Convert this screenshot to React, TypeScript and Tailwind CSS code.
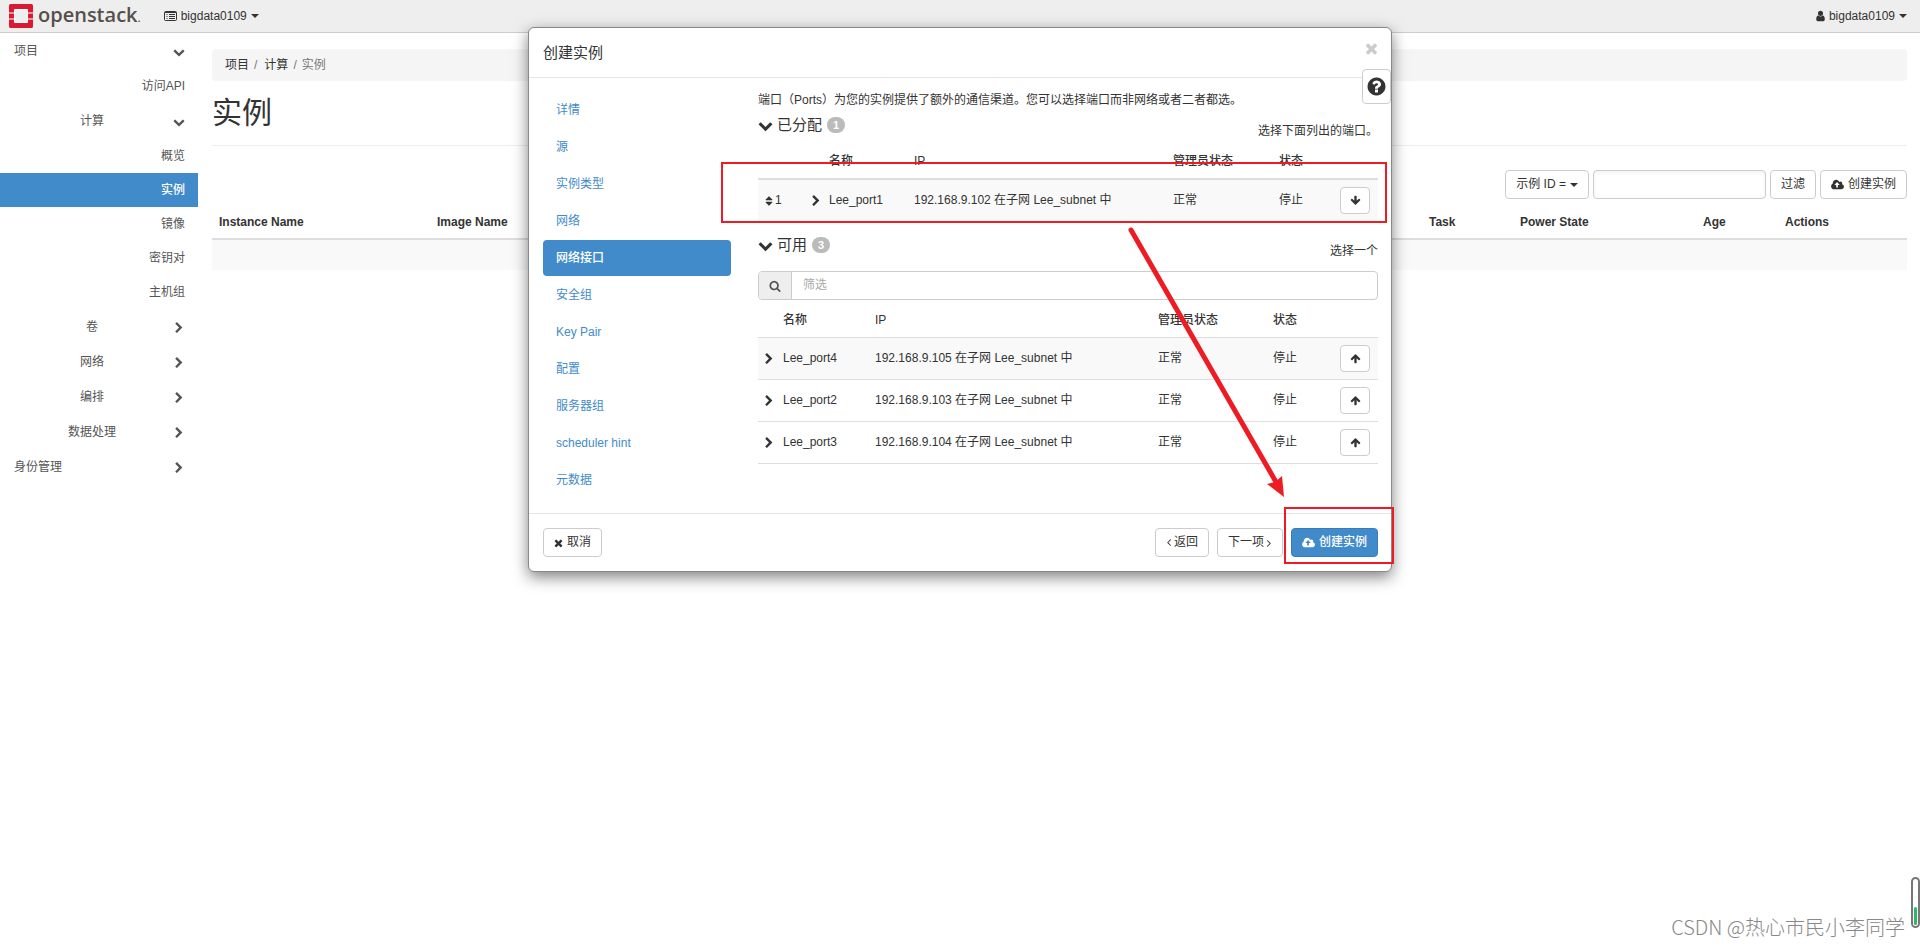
import type { ReactNode } from "react";
import clsx from "clsx";

const icons = {
  chevronDown:
    "M1683 808l-742 741q-19 19-45 19t-45-19l-742-741q-19-19-19-45.5t19-45.5l166-165q19-19 45-19t45 19l531 531 531-531q19-19 45-19t45 19l166 165q19 19 19 45.5t-19 45.5z",
  chevronRight:
    "M1363 877l-742 742q-19 19-45 19t-45-19l-166-166q-19-19-19-45t19-45l531-531-531-531q-19-19-19-45t19-45l166-166q19-19 45-19t45 19l742 742q19 19 19 45t-19 45z",
  times:
    "M1490 1322q0 40-28 68l-136 136q-28 28-68 28t-68-28l-294-294-294 294q-28 28-68 28t-68-28l-136-136q-28-28-28-68t28-68l294-294-294-294q-28-28-28-68t28-68l136-136q28-28 68-28t68 28l294 294 294-294q28-28 68-28t68 28l136 136q28 28 28 68t-28 68l-294 294 294 294q28 28 28 68z",
  question:
    "M1024 1376v-192q0-14-9-23t-23-9h-192q-14 0-23 9t-9 23v192q0 14 9 23t23 9h192q14 0 23-9t9-23zm256-672q0-88-55.5-163t-138.5-116-170-41q-243 0-371 213-15 24 8 42l132 100q7 6 19 6 16 0 25-12 53-68 86-92 34-24 86-24 48 0 85.5 26t37.5 59q0 38-20 61t-68 45q-63 28-115.5 86.5t-52.5 125.5v36q0 14 9 23t23 9h192q14 0 23-9t9-23q0-19 21.5-49.5t54.5-49.5q32-18 49-28.5t46-35 44.5-48 28-60.5 12.5-81zm384 192q0 209-103 385.5t-279.5 279.5-385.5 103-385.5-103-279.5-279.5-103-385.5 103-385.5 279.5-279.5 385.5-103 385.5 103 279.5 279.5 103 385.5z",
  cloud:
    "M1216 864q0-14-9-23l-352-352q-9-9-23-9t-23 9l-351 351q-10 12-10 24 0 14 9 23t23 9h224v352q0 13 9.5 22.5t22.5 9.5h192q13 0 22.5-9.5t9.5-22.5v-352h224q13 0 22.5-9.5t9.5-22.5zm640 288q0 159-112.5 271.5t-271.5 112.5h-1088q-185 0-316.5-131.5t-131.5-316.5q0-130 70-240t188-165q-2-30-2-43 0-212 150-362t362-150q156 0 285.5 87t188.5 231q71-62 166-62 106 0 181 75t75 181q0 76-41 138 130 31 213.5 135.5t83.5 238.5z",
  user: "M1536 1399q0 109-62.5 187t-150.5 78h-854q-88 0-150.5-78t-62.5-187q0-85 8.5-160.5t31.5-152 58.5-131 94-89 134.5-34.5q131 128 313 128t313-128q76 0 134.5 34.5t94 89 58.5 131 31.5 152 8.5 160.5zm-256-887q0 159-112.5 271.5t-271.5 112.5-271.5-112.5-112.5-271.5 112.5-271.5 271.5-112.5 271.5 112.5 112.5 271.5z",
  arrowUp:
    "M1675 971q0 51-37 90l-75 75q-38 38-91 38-54 0-90-38l-294-293v704q0 52-37.5 84.5t-90.5 32.5h-128q-53 0-90.5-32.5t-37.5-84.5v-704l-294 293q-36 38-90 38t-90-38l-75-75q-38-38-38-90 0-53 38-91l651-651q35-37 90-37 54 0 91 37l651 651q37 39 37 91z",
  sort: "M1408 1088q0 26-19 45l-448 448q-19 19-45 19t-45-19l-448-448q-19-19-19-45t19-45 45-19h896q26 0 45 19t19 45zm0-384q0 26-19 45t-45 19h-896q-26 0-45-19t-19-45 19-45l448-448q19-19 45-19t45 19l448 448q19 19 19 45z",
  search:
    "M1216 832q0-185-131.5-316.5t-316.5-131.5-316.5 131.5-131.5 316.5 131.5 316.5 316.5 131.5 316.5-131.5 131.5-316.5zm512 832q0 52-38 90t-90 38q-54 0-90-38l-343-342q-179 124-399 124-143 0-273.5-55.5t-225-150-150-225-55.5-273.5 55.5-273.5 150-225 225-150 273.5-55.5 273.5 55.5 225 150 150 225 55.5 273.5q0 220-124 399l343 343q37 37 37 90z",
  angleRight:
    "M1171 960q0 13-10 23l-466 466q-10 10-23 10t-23-10l-50-50q-10-10-10-23t10-23l393-393-393-393q-10-10-10-23t10-23l50-50q10-10 23-10t23 10l466 466q10 10 10 23z",
};

function Icon({ name, className = "size-3", box = "0 0 1792 1792" }: { name: keyof typeof icons; className?: string; box?: string }) {
  return (
    <svg viewBox={box} fill="currentColor" aria-hidden="true" className={clsx("shrink-0", className)}>
      <path d={icons[name]} />
    </svg>
  );
}

const CloudIcon = () => <Icon name="cloud" box="-64 0 1920 1792" className="h-3 w-[13px]" />;

const Caret = () => (
  <svg viewBox="0 0 8 4" fill="currentColor" aria-hidden="true" className="h-1 w-2 shrink-0">
    <path d="M0 0h8L4 4z" />
  </svg>
);

function Button({ children, primary, tight }: { children: ReactNode; primary?: boolean; tight?: boolean }) {
  return (
    <button
      type="button"
      className={clsx(
        "flex h-[29px] shrink-0 items-center justify-center rounded border px-[10px]",
        tight ? "gap-[2px]" : "gap-1",
        primary ? "border-[#357ebd] bg-[#428bca] font-medium text-white" : "border-[#ccc] bg-white",
      )}
    >
      {children}
    </button>
  );
}

function Logo() {
  return (
    <a href="#" aria-label="openstack" className="flex items-center gap-[5px] pl-[9px]">
      <svg viewBox="0 0 24 24" className="size-6" aria-hidden="true">
        <path fill="#fff" d="M0 8h5V5h14v3h5v8h-5v3H5v-3H0z" />
        <path fill="#eee" d="M6 6h12v12H6z" />
        <path fill="#da1a32" d="M1.500 0h21A1.500 1.500 0 0 1 24 1.500V8.500h-5V6a1 1 0 0 0-1-1H6a1 1 0 0 0-1 1v2.500H0v-7A1.500 1.500 0 0 1 1.500 0z" />
        <path fill="#da1a32" d="M0 15.500h5V18a1 1 0 0 0 1 1h12a1 1 0 0 0 1-1v-2.500h5v7a1.500 1.500 0 0 1-1.500 1.500h-21A1.500 1.500 0 0 1 0 22.500z" />
        <path fill="#da1a32" d="M0 9.500h5v5H0zM19 9.500h5v5h-5z" />
      </svg>
      <span className="pb-[2px] font-[Open_Sans,sans-serif] text-xl leading-6 font-semibold text-[#57504a]">
        openstack<span className="text-xs font-normal">.</span>
      </span>
    </a>
  );
}

function TopBar() {
  return (
    <header className="flex h-[33px] items-center border-b border-[#ccc] bg-[#eee]">
      <Logo />
      <button type="button" className="ml-[23px] flex items-center gap-1">
        <svg viewBox="0 0 13 11" className="h-[11px] w-[13px]" fill="none" stroke="currentColor" aria-hidden="true">
          <rect x=".5" y=".5" width="12" height="9" rx="1" />
          <path d="M1 1.500h11M2.500 3.500h1M5 3.500h6M2.500 5.500h1M5 5.500h6M2.500 7.500h1M5 7.500h6" />
        </svg>
        bigdata0109
        <Caret />
      </button>
      <button type="button" className="mr-[13px] ml-auto flex items-center gap-1">
        <Icon name="user" box="256 0 1280 1792" className="h-3 w-[9px]" />
        bigdata0109
        <Caret />
      </button>
    </header>
  );
}

function SideRow({ label, open, center }: { label: string; open?: boolean; center?: boolean }) {
  return (
    <button type="button" className="flex h-[35px] w-full items-center pr-[13px] pl-[14px]">
      <span className={clsx("grow pr-[3px]", center ? "text-center" : "text-left")}>{label}</span>
      <Icon name={open ? "chevronDown" : "chevronRight"} />
    </button>
  );
}

function SideBar() {
  return (
    <nav className="w-[198px] shrink-0 pt-px text-[#555]">
      <SideRow label="项目" open />
      <a href="#" className="flex h-[35px] items-center justify-end px-[13px]">
        访问API
      </a>
      <SideRow label="计算" open center />
      <ul className="pb-px">
        {["概览", "实例", "镜像", "密钥对", "主机组"].map((label) => (
          <li key={label}>
            <a
              href="#"
              className={clsx(
                "flex h-[34px] items-center justify-end px-[13px]",
                label === "实例" && "bg-[#428bca] font-medium text-white",
              )}
            >
              {label}
            </a>
          </li>
        ))}
      </ul>
      <SideRow label="卷" center />
      <SideRow label="网络" center />
      <SideRow label="编排" center />
      <SideRow label="数据处理" center />
      <SideRow label="身份管理" />
    </nav>
  );
}

function InstancesPage() {
  return (
    <main className="min-w-0 grow pt-4 pr-[13px] pl-[14px]">
      <ol className="flex h-8 items-center rounded bg-[#f5f5f5] px-[13px]">
        <li>
          <a href="#">项目</a>
          <span className="px-[5px] text-[#777]">/</span>
        </li>
        <li className="pl-[2px]">
          <a href="#">计算</a>
          <span className="px-[5px] text-[#777]">/</span>
        </li>
        <li className="text-[#777]">实例</li>
      </ol>
      <h1 className="border-b border-[#eee] pt-[15px] pb-4 text-[30px] leading-[33px]">实例</h1>
      <div className="mt-6 flex items-center justify-end gap-1">
        <Button>
          示例 ID = <Caret />
        </Button>
        <input aria-label="过滤" className="h-[29px] w-[173px] rounded border border-[#ccc] px-2 shadow-inner shadow-black/5" />
        <Button>过滤</Button>
        <Button>
          <CloudIcon />
          创建实例
        </Button>
      </div>
      <table className="mt-[7px] w-full table-fixed border-collapse text-left">
        <thead>
          <tr className="border-b-2 border-[#ddd]">
            <th className="w-[218px] px-[7px] pt-2 pb-[7px]">Instance Name</th>
            <th className="w-[218px] px-[7px] pt-2 pb-[7px]">Image Name</th>
            <td />
            <th className="w-[91px] px-[7px] pt-2 pb-[7px]">Task</th>
            <th className="w-[183px] px-[7px] pt-2 pb-[7px]">Power State</th>
            <th className="w-[82px] px-[7px] pt-2 pb-[7px]">Age</th>
            <th className="w-[129px] px-[7px] pt-2 pb-[7px]">Actions</th>
          </tr>
        </thead>
        <tbody>
          <tr className="h-[31px] bg-[#f9f9f9]">
            <td colSpan={7} />
          </tr>
        </tbody>
      </table>
    </main>
  );
}

function SectionTitle({ title, count, hint }: { title: string; count: number; hint: string }) {
  return (
    <div className="flex h-[31px] justify-between">
      <h2 className="flex items-center self-end pb-[7px] text-[15px] leading-4">
        <Icon name="chevronDown" className="mr-1 size-[15px]" />
        {title}
        <span className="ml-[5px] flex h-4 items-center rounded-full bg-[#bbb] px-[6px] text-[11px] leading-4 font-bold text-white">
          {count}
        </span>
      </h2>
      <span className="self-end">{hint}</span>
    </div>
  );
}

function MoveButton({ label, down }: { label: string; down?: boolean }) {
  return (
    <button
      type="button"
      aria-label={label}
      className="flex h-[27px] w-[30px] items-center justify-center rounded-sm border border-[#ccc] bg-white"
    >
      <Icon name="arrowUp" className={clsx("size-[11px]", down && "rotate-180")} />
    </button>
  );
}

function AllocatedPorts() {
  return (
    <table className="w-full table-fixed border-collapse text-left">
      <thead>
        <tr className="border-b-2 border-[#ddd]">
          <td className="w-[45px]" />
          <td className="w-[19px]" />
          <th className="w-[85px] px-[7px] pt-[13px] pb-2 font-medium">名称</th>
          <th className="px-[7px] pt-[13px] pb-2 font-medium">IP</th>
          <th className="w-[106px] px-[7px] pt-[13px] pb-2 font-medium">管理员状态</th>
          <th className="w-[61px] px-[7px] pt-[13px] pb-2 font-medium">状态</th>
          <td className="w-[45px]" />
        </tr>
      </thead>
      <tbody>
        <tr className="h-[42px] bg-[#f9f9f9]">
          <td className="pl-[5px]">
            <span className="flex items-center">
              <Icon name="sort" />1
            </span>
          </td>
          <td className="pl-[7px]">
            <Icon name="chevronRight" />
          </td>
          <td className="px-[7px]">Lee_port1</td>
          <td className="px-[7px]">192.168.9.102 在子网 Lee_subnet 中</td>
          <td className="px-[7px]">正常</td>
          <td className="px-[7px]">停止</td>
          <td className="px-[7px]">
            <MoveButton label="Lee_port1" down />
          </td>
        </tr>
      </tbody>
    </table>
  );
}

const available = [
  { name: "Lee_port4", ip: "192.168.9.105" },
  { name: "Lee_port2", ip: "192.168.9.103" },
  { name: "Lee_port3", ip: "192.168.9.104" },
];

function AvailablePorts() {
  return (
    <table className="w-full table-fixed border-collapse text-left">
      <thead>
        <tr>
          <td className="w-[18px]" />
          <th className="w-[92px] px-[7px] pt-3 pb-2 font-medium">名称</th>
          <th className="px-[7px] pt-3 pb-2 font-medium">IP</th>
          <th className="w-[115px] px-[7px] pt-3 pb-2 font-medium">管理员状态</th>
          <th className="w-[67px] px-[7px] pt-3 pb-2 font-medium">状态</th>
          <td className="w-[45px]" />
        </tr>
      </thead>
      <tbody>
        {available.map((port) => (
          <tr key={port.name} className="h-[42px] border-y border-[#ddd] first:bg-[#f9f9f9]">
            <td className="pl-[5px]">
              <Icon name="chevronRight" />
            </td>
            <td className="px-[7px]">{port.name}</td>
            <td className="px-[7px]">{port.ip} 在子网 Lee_subnet 中</td>
            <td className="px-[7px]">正常</td>
            <td className="px-[7px]">停止</td>
            <td className="px-[7px]">
              <MoveButton label={port.name} />
            </td>
          </tr>
        ))}
      </tbody>
    </table>
  );
}

const steps = ["详情", "源", "实例类型", "网络", "网络接口", "安全组", "Key Pair", "配置", "服务器组", "scheduler hint", "元数据"];

/* Red frames and the arrow that leads from the port row to the launch button */
function Annotations() {
  return (
    <div className="pointer-events-none absolute inset-0">
      <div className="absolute top-[134px] right-1 left-[192px] h-[61px] border-2 border-[#ed1c24]" />
      <div className="absolute -right-[3px] bottom-[7px] h-[57px] w-[110px] border-2 border-[#ed1c24]" />
      <svg viewBox="0 0 160 272" className="absolute top-[199px] right-[104px] h-[272px] w-[160px]" aria-hidden="true">
        <path d="M4 3l145 252" stroke="#ed1c24" strokeWidth="5" strokeLinecap="round" />
        <path d="M157 270l-17-13 8-2 7-6z" fill="#ed1c24" />
      </svg>
    </div>
  );
}

function LaunchDialog() {
  return (
    <div
      role="dialog"
      aria-label="创建实例"
      className="absolute inset-x-0 top-[27px] mx-auto w-[864px] max-w-full rounded-md border border-[#888] bg-white shadow-[0_5px_15px_rgba(0,0,0,0.5)]"
    >
      <div className="flex h-[50px] items-center justify-between border-b border-[#e5e5e5] pr-[13px] pl-[14px]">
        <h4 className="text-[15px] leading-5">创建实例</h4>
        <button type="button" aria-label="Close" className="pb-2 text-[#ccc]">
          <Icon name="times" box="192 0 1408 1792" className="h-[17px] w-[13px]" />
        </button>
      </div>
      <button
        type="button"
        aria-label="Help"
        className="absolute top-[41px] right-0 flex h-[35px] w-[29px] items-center justify-center rounded-sm border border-[#ccc] bg-white"
      >
        <Icon name="question" className="size-[21px]" />
      </button>

      <div className="flex gap-[27px] pt-[14px] pr-[13px] pb-[15px] pl-[14px]">
        <ul className="flex w-[188px] shrink-0 flex-col gap-px">
          {steps.map((step) => (
            <li key={step}>
              <a
                href="#"
                className={clsx(
                  "flex h-9 items-center rounded px-[13px]",
                  step === "网络接口" ? "bg-[#428bca] font-medium text-white" : "text-[#428bca]",
                )}
              >
                {step}
              </a>
            </li>
          ))}
        </ul>
        <div className="min-w-0 grow">
          <p>端口（Ports）为您的实例提供了额外的通信渠道。您可以选择端口而非网络或者二者都选。</p>
          <SectionTitle title="已分配" count={1} hint="选择下面列出的端口。" />
          <AllocatedPorts />
          <div className="mt-2">
            <SectionTitle title="可用" count={3} hint="选择一个" />
          </div>
          <label className="mt-[11px] flex h-[29px] overflow-hidden rounded border border-[#ccc]">
            <span className="flex w-[33px] items-center justify-center border-r border-[#ccc] bg-[#eee] text-[#555]">
              <Icon name="search" />
            </span>
            <input placeholder="筛选" className="grow px-[11px] outline-none placeholder:text-[#aaa]" />
          </label>
          <AvailablePorts />
        </div>
      </div>

      <div className="flex border-t border-[#e5e5e5] py-[14px] pr-[13px] pl-[14px]">
        <Button>
          <Icon name="times" box="192 0 1408 1792" className="h-3 w-[9px]" />
          取消
        </Button>
        <div className="ml-auto flex gap-2">
          <Button tight>
            <Icon name="angleRight" className="h-3 w-[6px] rotate-180" box="448 0 896 1792" />
            返回
          </Button>
          <Button tight>
            下一项
            <Icon name="angleRight" className="h-3 w-[6px]" box="448 0 896 1792" />
          </Button>
          <Button primary>
            <CloudIcon />
            创建实例
          </Button>
        </div>
      </div>
      <Annotations />
    </div>
  );
}

export default function App() {
  return (
    <div className="relative min-h-screen bg-white font-['Liberation_Sans','Noto_Sans_CJK_SC',sans-serif] text-xs leading-[17px] text-[#333]">
      <TopBar />
      <div className="flex">
        <SideBar />
        <InstancesPage />
      </div>
      <LaunchDialog />

      {/* Scroll gauge on the window edge */}
      <div className="absolute right-0 bottom-[18px] flex h-[51px] w-[9px] items-end justify-center rounded-full border-2 border-[#777] bg-white pb-px">
        <div className="h-[18px] w-[3px] rounded-full bg-[#2bb866]" />
      </div>
      <div className="absolute right-[15px] bottom-[7px] font-['Noto_Sans_CJK_SC',sans-serif] text-xl leading-6 font-light text-[#888]">
        CSDN @热心市民小李同学
      </div>
    </div>
  );
}
